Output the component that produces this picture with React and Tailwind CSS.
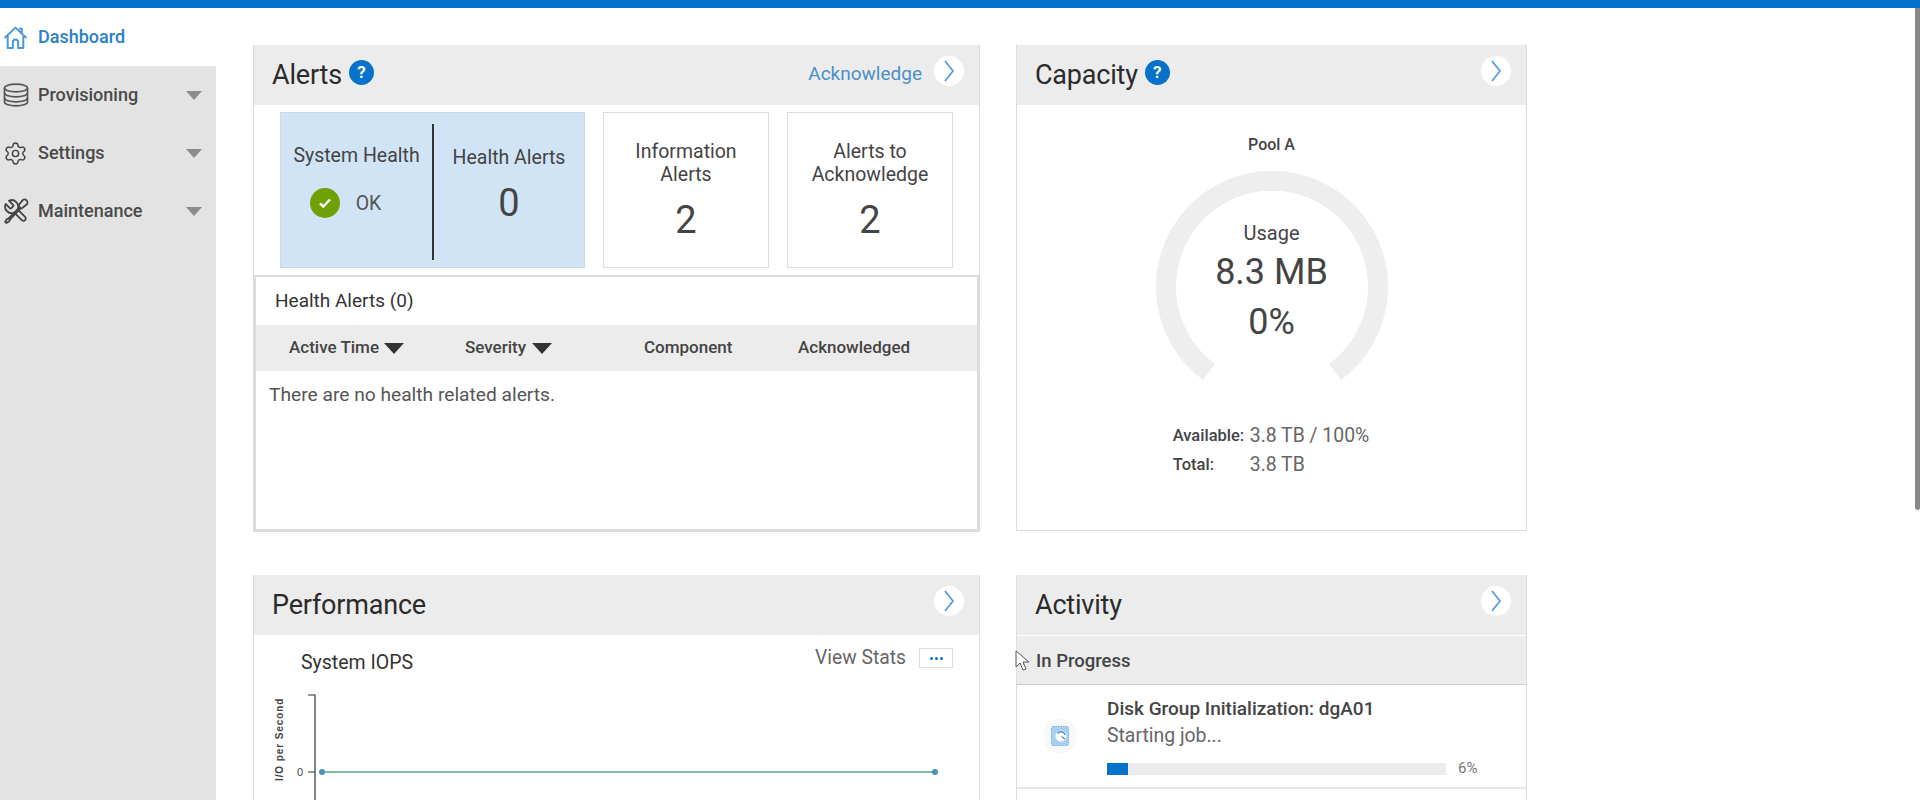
import React from "react";
import { Settings } from "lucide-react";

const font = { fontFamily: "Roboto, sans-serif" };

const Caret = ({ className }) => (
  <svg viewBox="0 0 20 11" className={className}>
    <path d="M0 0h20L10 11z" fill="currentColor" />
  </svg>
);

const HomeIcon = () => (
  <svg viewBox="0 0 24 24" className="w-[25px] h-[25px]" fill="none" stroke="#4a98d8" strokeWidth="1.9" strokeLinejoin="round">
    <path d="M1.5 12.5 12 2.5l10.5 10M18 7.5V3.5h-2.5" />
    <path d="M4.5 10.5V22h5v-5.5a2.5 2.5 0 0 1 5 0V22h5V10.5" />
  </svg>
);

const DbIcon = () => (
  <svg viewBox="0 0 26 24" className="w-[26px] h-[24px]" fill="none" stroke="#555" strokeWidth="1.7">
    <ellipse cx="13" cy="5" rx="11.5" ry="3.8" />
    <path d="M1.5 5v14c0 2.1 5.1 3.8 11.5 3.8s11.5-1.7 11.5-3.8V5" />
    <path d="M1.5 10c0 2.1 5.1 3.8 11.5 3.8s11.5-1.7 11.5-3.8" />
    <path d="M1.5 15c0 2.1 5.1 3.8 11.5 3.8s11.5-1.7 11.5-3.8" />
  </svg>
);

const ToolsIcon = () => (
  <svg viewBox="0 0 24 24" className="w-[26px] h-[26px]" fill="none" stroke="#444" strokeWidth="1.7" strokeLinejoin="round">
    <path
      transform="matrix(-1 0 0 1 24 0)"
      d="M14.7 6.3a1 1 0 0 0 0 1.4l1.6 1.6a1 1 0 0 0 1.4 0l3.77-3.77a6 6 0 0 1-7.94 7.94l-6.91 6.91a2.12 2.12 0 0 1-3-3l6.91-6.91a6 6 0 0 1 7.94-7.94l-3.76 3.76z"
    />
    <path d="M14.5 6.5 18 2.2a2 2 0 0 1 3.8 3.8l-4.3 3.5-1.6.1z" fill="#e3e3e3" />
    <path d="M15.5 8.5 5 19l-1.5.5L2 22.2 3.2 23l2.6-1.6.5-1.4L16.4 9.4" />
  </svg>
);

const NavRow = ({ icon, label }) => (
  <div className="h-[58px] flex items-center pl-[3px] pr-[14px] text-[#444]">
    <span className="w-[35px] flex-none">{icon}</span>
    <span className="text-[18px] font-medium text-[#4a4a4a] flex-1 -mt-[2px]">{label}</span>
    <Caret className="w-[16px] h-[9px] text-[#8c8c8c]" />
  </div>
);

const Sidebar = () => (
  <aside className="w-[216px] flex-none flex flex-col">
    <div className="h-[58px] flex items-center pl-[3px] bg-white">
      <span className="w-[35px]">
        <HomeIcon />
      </span>
      <span className="text-[18px] font-medium text-[#2a80c6] -mt-[2px]">Dashboard</span>
    </div>
    <div className="flex-1 bg-[#e3e3e3]">
      <NavRow icon={<DbIcon />} label="Provisioning" />
      <NavRow icon={<Settings size={25} strokeWidth={1.4} />} label="Settings" />
      <NavRow icon={<ToolsIcon />} label="Maintenance" />
    </div>
  </aside>
);

const Help = () => (
  <span className="w-[25px] h-[25px] rounded-full bg-[#0672cb] text-white text-[17px] font-bold flex items-center justify-center -mt-[5px]">
    ?
  </span>
);

const More = () => (
  <span className="w-[30px] h-[30px] rounded-full bg-white flex items-center justify-center">
    <svg viewBox="0 0 12 24" className="w-[12px] h-[24px]" fill="none" stroke="#4a98d8" strokeWidth="1.6">
      <path d="M2 2l8 10-8 10" />
    </svg>
  </span>
);

const PanelHead = ({ title, help, action }) => (
  <div className="h-[60px] bg-[#ececec] flex items-center pl-[18px] pr-[15px] -mt-px">
    <h2 className="text-[27px] font-normal tracking-[-0.2px] text-[#2b2b2b] mr-[7px] leading-none">{title}</h2>
    {help && <Help />}
    <div className="ml-auto flex items-center -mt-[8px]">
      {action && <span className="text-[19px] text-[#4a8fc8] mr-[12px] mt-[6px]">{action}</span>}
      <More />
    </div>
  </div>
);

const CountCard = ({ line1, line2, count }) => (
  <div className="w-[166px] h-[156px] border border-[#dcdcdc] flex flex-col items-center pt-[27px] text-[#444]">
    <div className="text-[19.5px] leading-[23px] text-center">
      {line1}
      <br />
      {line2}
    </div>
    <div className="text-[38px] leading-none mt-[15px]">{count}</div>
  </div>
);

const Alerts = () => (
  <section className="h-[487px] border border-[#dcdcdc] flex flex-col">
    <PanelHead title="Alerts" help action="Acknowledge" />
    <div className="flex gap-[18px] pl-[26px] pt-[7px] h-[170px] flex-none">
      <div className="w-[305px] h-[156px] bg-[#d0e4f6] border border-[#c9d9e6] flex items-center text-[#444] px-0">
        <div className="w-[151px] h-full flex flex-col items-center pt-[31px]">
          <div className="text-[19.5px] leading-[23px] whitespace-nowrap">System Health</div>
          <div className="flex items-center mt-[20px] -ml-[22px]">
            <span className="w-[30px] h-[30px] rounded-full bg-[#6ea204] flex items-center justify-center">
              <svg viewBox="0 0 16 16" className="w-[16px] h-[16px]" fill="none" stroke="#fff" strokeWidth="2.4">
                <path d="M3 8.5l3.3 3L13 4.5" />
              </svg>
            </span>
            <span className="text-[19.5px] text-[#555] ml-[16px] mt-[2px]">OK</span>
          </div>
        </div>
        <div className="w-[2px] h-[136px] bg-[#333] mt-[4px]" />
        <div className="flex-1 h-full flex flex-col items-center pt-[33px]">
          <div className="text-[19.5px] leading-[23px] whitespace-nowrap">Health Alerts</div>
          <div className="text-[38px] leading-none mt-[15px]">0</div>
        </div>
      </div>
      <CountCard line1="Information" line2="Alerts" count="2" />
      <CountCard line1="Alerts to" line2="Acknowledge" count="2" />
    </div>
    <div className="flex-1 border-2 border-[#dcdcdc] flex flex-col">
      <div className="h-[48px] flex items-center pl-[19px] text-[19px] text-[#333]">Health Alerts (0)</div>
      <div className="h-[46px] bg-[#ececec] grid grid-cols-[210px_179px_154px_1fr] items-center pl-[33px] text-[17px] text-[#444] font-medium">
        <div className="flex items-center gap-[5px]">
          Active Time <Caret className="w-[20px] h-[11px] text-[#333]" />
        </div>
        <div className="flex items-center gap-[6px] -ml-[34px]">
          Severity <Caret className="w-[20px] h-[11px] text-[#333]" />
        </div>
        <div className="-ml-[34px]">Component</div>
        <div className="-ml-[34px]">Acknowledged</div>
      </div>
      <div className="pl-[13px] pt-[10px] text-[19.2px] text-[#555]">There are no health related alerts.</div>
    </div>
  </section>
);

const Capacity = () => (
  <section className="h-[486px] border border-[#dcdcdc] flex flex-col items-stretch">
    <PanelHead title="Capacity" help />
    <div className="flex flex-col items-center text-[#444]">
      <div className="mt-[29px] text-[16px] font-medium leading-[22px]">Pool A</div>
      <div className="relative w-[240px] h-[240px] mt-[11px]">
        <svg viewBox="0 0 240 240" className="w-full h-full" fill="none">
          <path d="M57 205A106 106 0 1 1 183 205" stroke="#eeeeee" strokeWidth="20" />
        </svg>
        <div className="absolute inset-0 flex flex-col items-center pt-[54px]">
          <div className="text-[20px] leading-[24px]">Usage</div>
          <div className="text-[36px] leading-[44px] mt-[5px]">8.3 MB</div>
          <div className="text-[36px] leading-[44px] mt-[6px]">0%</div>
        </div>
      </div>
      <div className="mt-[18px] grid grid-cols-[77px_auto] gap-y-[7px] text-[19.4px] leading-[22px] -ml-[1px]">
        <span className="text-[16.5px] font-medium">Available:</span>
        <span className="text-[#666]">3.8 TB / 100%</span>
        <span className="text-[16.5px] font-medium">Total:</span>
        <span className="text-[#666]">3.8 TB</span>
      </div>
    </div>
  </section>
);

const Performance = () => (
  <section className="h-[300px] border border-[#dcdcdc] border-b-0 flex flex-col">
    <PanelHead title="Performance" />
    <div className="relative flex-1">
      <div className="flex items-start pt-[9px] pl-[47px] pr-[26px]">
        <span className="text-[19.5px] text-[#333] mt-[4px]">System IOPS</span>
        <span className="ml-auto text-[19.3px] text-[#666]">View Stats</span>
        <span className="ml-[13px] mt-[4px] w-[34px] h-[20px] border border-[#dcdcdc] flex items-center justify-center gap-[2px]">
          <i className="w-[3px] h-[3px] rounded-full bg-[#0672cb]" />
          <i className="w-[3px] h-[3px] rounded-full bg-[#0672cb]" />
          <i className="w-[3px] h-[3px] rounded-full bg-[#0672cb]" />
        </span>
      </div>
      <svg viewBox="0 0 720 120" className="absolute left-0 top-[56px] w-[720px] h-[120px]" fill="none">
        <path d="M54 4h7v120M54 81h7" stroke="#333" strokeWidth="1.2" />
        <path d="M68 81H681" stroke="#7fbfa8" strokeWidth="2" />
        <circle cx="68" cy="81" r="3" fill="#4a90b8" />
        <circle cx="681" cy="81" r="3" fill="#4a90b8" />
        <text x="46" y="85" textAnchor="middle" fontSize="11" fill="#444" fontFamily="Liberation Sans, sans-serif">0</text>
        <text transform="translate(29 90) rotate(-90)" fontSize="10" fontWeight="700" letterSpacing="0.9" fill="#444" fontFamily="Liberation Sans, sans-serif">I/O per Second</text>
      </svg>
    </div>
  </section>
);

const Activity = () => (
  <section className="h-[300px] border border-[#dcdcdc] border-b-0 flex flex-col">
    <PanelHead title="Activity" />
    <div className="h-[50px] bg-[#ececec] border-t border-white border-b border-b-[#cfcfcf] flex items-center pl-[19px] pt-[4px] text-[18.5px] font-medium text-[#444]">
      In Progress
    </div>
    <div className="h-[104px] border-b-2 border-[#e8e8e8] flex">
      <div className="w-[90px] flex-none flex justify-center pt-[34px] pr-[4px]">
        <span className="w-[34px] h-[34px] rounded-full bg-[#f6f8fb] flex items-center justify-center">
          <svg viewBox="0 0 18 20" className="w-[18px] h-[20px]">
            <rect x="0.5" y="0.5" width="17" height="19" rx="1.5" fill="#a9cff0" stroke="#6fb0e6" strokeDasharray="1.5 1" />
            <circle cx="10" cy="10" r="5.5" fill="#fff" />
            <path d="M6.5 7.5A4.2 4.2 0 0 1 14 9M14 13l-3.5-2.5" fill="none" stroke="#4a8fc8" strokeWidth="1.5" />
          </svg>
        </span>
      </div>
      <div className="flex-1 pt-[12px]">
        <div className="text-[19px] font-medium text-[#444] leading-[24px]">Disk Group Initialization: dgA01</div>
        <div className="text-[19.4px] text-[#666] leading-[24px] mt-[3px]">Starting job...</div>
        <div className="flex items-center mt-[13px]">
          <div className="w-[339px] h-[12px] bg-[#ececec]">
            <div className="w-[21px] h-full bg-[#0672cb]" />
          </div>
          <span className="ml-[12px] text-[15px] text-[#777] leading-none">6%</span>
        </div>
      </div>
    </div>
  </section>
);

const Cursor = () => (
  <svg viewBox="0 0 16 22" className="absolute left-[1015px] top-[650px] w-[16px] h-[22px]">
    <path d="M1 1v16l4-4 3 7 3-1-3-7h6z" fill="#fff" stroke="#555" strokeWidth="1" />
  </svg>
);

export default function App() {
  return (
    <div className="relative h-[800px] overflow-hidden bg-white flex flex-col" style={font}>
      <div className="h-[8px] bg-[#0672cb] flex-none" />
      <div className="flex flex-1 min-h-0">
        <Sidebar />
        <main className="pl-[37px] pt-[37px] grid grid-cols-[727px_511px] gap-x-[36px] gap-y-[43px] content-start">
          <Alerts />
          <Capacity />
          <Performance />
          <Activity />
        </main>
      </div>
      <div className="absolute right-0 top-[8px] w-[5px] h-[502px] bg-[#888] rounded-b-sm" />
      <Cursor />
    </div>
  );
}
